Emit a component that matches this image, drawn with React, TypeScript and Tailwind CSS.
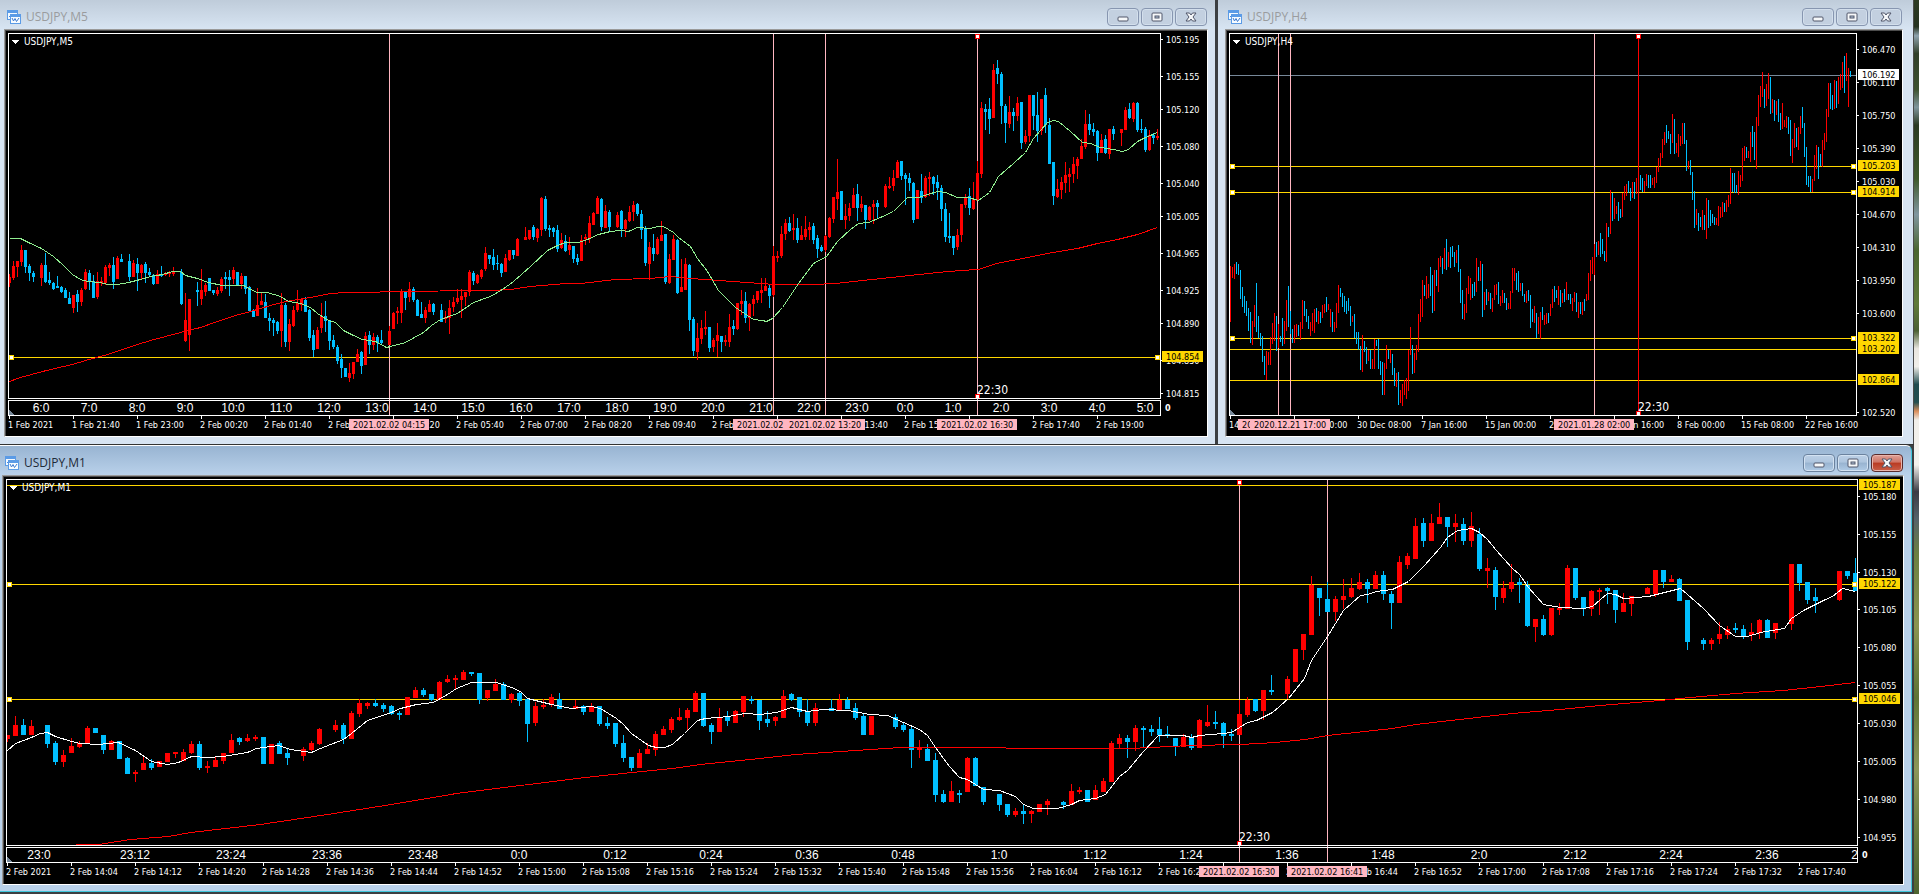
import clsx from "clsx";

export default function App() {
  return (
    <div className="flex min-h-screen bg-[#3c3f42]">
      <main className="min-w-0 flex-1">
        <div className="grid grid-cols-[1215fr_696fr] gap-[3px] border-b border-[#333333]">
          <ChartWindow title="USDJPY,M5" frame="pl-1 pr-[7px] pb-[7px]" bar="pl-[3px]">
            <Chart {...m5} />
          </ChartWindow>
          <ChartWindow title="USDJPY,H4" frame="pl-[7px] pr-[10px] pb-[7px] border-r border-[#4a4a4a]" bar="pl-[3px]">
            <Chart {...h4} />
          </ChartWindow>
        </div>
        <ChartWindow
          title="USDJPY,M1"
          active
          frame="mr-[2px] pl-[2px] pr-[7px] pb-[6px] border-t border-t-white border-r border-r-[#3fc6dc] border-b border-b-[#3fc6dc] rounded-tr-md"
          bar="pl-[3px]"
        >
          <Chart {...m1} />
        </ChartWindow>
      </main>
      <aside className="w-[5px] bg-[linear-gradient(180deg,#2c3a22_0%,#26331f_3%,#8fa3ae_4%,#2f3f2a_6%,#3d5230_10%,#7f959c_12%,#2a3a22_14%,#3f5a2c_20%,#8096a0_24%,#4a6630_28%,#5f7a3a_34%,#4b6034_37%,#e9e6df_39%,#f1efea_41%,#1f4c50_43%,#234f50_45%,#d98e5c_46%,#f1efea_47%,#f3f1ec_52%,#3a3a44_55%,#55626a_58%,#6c8040_62%,#8a9450_70%,#5f7434_78%,#8c9658_86%,#6a7c40_93%,#4e6430_100%)]" />
    </div>
  );
}

interface WindowProps {
  title: string;
  frame: string;
  bar: string;
  active?: boolean;
  children: React.ReactNode;
}

function ChartWindow({ title, frame, bar, active, children }: WindowProps) {
  return (
    <section
      className={clsx(
        "min-w-0",
        frame,
        active
          ? "bg-[linear-gradient(180deg,#98b4d2_0px,#b9d1ea_29px)]"
          : "bg-[linear-gradient(180deg,#bfccda_0px,#d7e4f2_29px)]"
      )}
    >
      <header className={clsx("flex h-[29px] items-center justify-between pt-1", bar)}>
        <div className="flex items-center gap-[5px]">
          <WindowIcon />
          <h2
            className={clsx(
              "[font-family:'Open_Sans',sans-serif] text-xs leading-4",
              active ? "text-[#1e2a38]" : "text-[#9a9c9e]"
            )}
          >
            {title}
          </h2>
        </div>
        <div className="flex gap-[2px] pr-px">
          <WindowButton label="Minimize" active={active}>
            <rect x="1" y="4" width="10" height="4" rx="1" />
          </WindowButton>
          <WindowButton label="Restore" active={active}>
            <rect x="1" y="0" width="10" height="8" rx="1" />
            <rect x="4" y="3" width="4" height="2" fill="#b4c6da" />
          </WindowButton>
          <WindowButton label="Close" active={active} danger={active}>
            <path d="M1 0h3.5L6 2 7.500 0H11L8 4l3 4H7.500L6 6 4.500 8H1l3-4z" />
          </WindowButton>
        </div>
      </header>
      <div className="border border-t-[#9a9a9a] border-l-[#9a9a9a] border-r-white border-b-white">
        <div className="border-t border-l border-[#4d4d4d] bg-black">{children}</div>
      </div>
    </section>
  );
}

interface ButtonProps {
  label: string;
  active?: boolean;
  danger?: boolean;
  children: React.ReactNode;
}

function WindowButton({ label, active, danger, children }: ButtonProps) {
  return (
    <button
      type="button"
      aria-label={label}
      className={clsx(
        "flex h-[18px] w-8 items-center justify-center rounded-sm border inset-ring",
        danger
          ? "border-[#5a2a2a] bg-[linear-gradient(180deg,#dfa198_0%,#cf7464_45%,#b93a22_50%,#c9604a_100%)] inset-ring-[#eab5ab]"
          : active
            ? "border-[#6b829e] bg-[linear-gradient(180deg,#bcd0e6_0%,#aec5de_45%,#98b3d0_50%,#b0cbe6_100%)] inset-ring-[#d3e2f2]"
            : "border-[#8796b0] bg-[#c3d0e0] inset-ring-[#d3dfec]"
      )}
    >
      <svg viewBox="0 -1 12 10" className="h-[10px] w-3" fill="#f6f8fa" stroke="#50566a" strokeWidth="1">
        {children}
      </svg>
    </button>
  );
}

function WindowIcon() {
  return (
    <svg viewBox="0 0 14 14" className="size-[14px]" shapeRendering="crispEdges">
      <rect x="0" y="0" width="11" height="10" fill="#5b9be6" />
      <rect x="1" y="3" width="9" height="6" fill="#f4faff" />
      <path d="M2 6.500h1v-2h1v2h1v-1h1" fill="none" stroke="#4a86d8" />
      <rect x="3" y="4" width="11" height="10" fill="#5b9be6" />
      <rect x="4" y="7" width="9" height="6" fill="#f8fcff" />
      <path d="M5 8l1.500 3L8 8.500 9.500 11.500 12 8" fill="none" stroke="#3f7bd0" shapeRendering="auto" />
    </svg>
  );
}

interface ChartData {
  symbol: string;
  // left, top, right and bottom edge of the plot frame
  plot: [number, number, number, number];
  view: [number, number, number, number];
  axisY: number;
  candles: Candle[];
  bodyWidth: number;
  averages: { color: string; points: string }[];
  levels: { y: number; price: string; handles?: boolean; current?: boolean }[];
  verticals: { x: number; red?: boolean }[];
  session: { x: number; y: number };
  stamps: [number, string][];
  prices: [number, string][];
  dates: string[];
  hours?: { first: number; step: number; labels: string[] };
}

interface Candle {
  x: number;
  up: boolean;
  high: number;
  top: number;
  bottom: number;
  low: number;
}

function Chart(c: ChartData) {
  const [left, top, right, bottom] = c.plot;
  const clip = `clip-${c.symbol}`;
  return (
    <svg
      viewBox={c.view.join(" ")}
      className="block h-auto w-full [font-family:'DejaVu_Sans_Condensed','DejaVu_Sans',sans-serif]"
      shapeRendering="crispEdges"
      role="img"
      aria-label={c.symbol}
    >
      <clipPath id={clip}>
        <rect x={left + 1} y={top + 1} width={right - left - 1} height={c.axisY - top - 1} />
      </clipPath>

      <g clipPath={`url(#${clip})`}>
        {c.levels.map((l) => (
          <rect key={l.y} x={left} y={l.y} width={right - left} height={1} fill={l.current ? "#778899" : "#ffd700"} />
        ))}
        {c.verticals.map((v) => (
          <rect key={v.x} x={v.x} y={top} width={1} height={c.axisY - top} fill={v.red ? "#ff0000" : "#ffb6c1"} />
        ))}
        {c.candles.map((k) => (
          <g key={k.x} fill={k.up ? "#ff0000" : "#00bfff"}>
            <rect x={k.x} y={k.high} width={1} height={Math.max(1, k.low - k.high)} />
            {c.bodyWidth > 1 && (
              <rect
                x={k.x - (c.bodyWidth - 1) / 2}
                y={k.top}
                width={c.bodyWidth}
                height={Math.max(1, k.bottom - k.top)}
              />
            )}
          </g>
        ))}
        {c.averages.map((a) => (
          <polyline key={a.color} points={a.points} fill="none" stroke={a.color} transform="translate(.5 .5)" />
        ))}
      </g>

      {c.levels
        .filter((l) => l.handles)
        .map((l) => (
          <g key={l.y} fill="#ffffff" stroke="#ffd700">
            <rect x={left + 1.5} y={l.y - 1.5} width={4} height={4} />
            <rect x={right - 4.5} y={l.y - 1.5} width={4} height={4} />
          </g>
        ))}
      <g fill="#ffffff" stroke="#ff0000">
        <rect x={c.session.x - 1.5} y={top + 1.5} width={4} height={4} />
        <rect x={c.session.x - 1.5} y={bottom - 3.5} width={4} height={4} />
      </g>
      <text x={c.session.x} y={c.session.y} fill="#ffffff" className="text-xs">
        22:30
      </text>

      <path d={`M${left + 4} ${top + 7}h7l-3.500 4z`} fill="#ffffff" />
      <text x={left + 16} y={top + 12} fill="#ffffff" className="text-[10px]">
        {c.symbol}
      </text>

      <rect x={left + 0.5} y={top + 0.5} width={right - left} height={bottom - top} fill="none" stroke="#ffffff" />
      {c.hours && (
        <>
          <rect
            x={left + 0.5}
            y={bottom + 2.5}
            width={right - left}
            height={c.axisY - bottom - 2}
            fill="none"
            stroke="#ffffff"
          />
          {c.verticals.map((v) => (
            <rect key={v.x} x={v.x} y={bottom + 3} width={1} height={c.axisY - bottom - 3} fill="#ffb6c1" />
          ))}
          <g
            fill="#ffffff"
            textAnchor="middle"
            className="[font-family:'Liberation_Sans',sans-serif] text-xs"
            clipPath={`url(#${clip})`}
          >
            {c.hours.labels.map((label, i) => (
              <text key={label} x={c.hours!.first + i * c.hours!.step} y={c.axisY - 3}>
                {label}
              </text>
            ))}
          </g>
          <text x={right + 5} y={c.axisY - 4} fill="#ffffff" className="text-[9px] font-bold">
            0
          </text>
        </>
      )}
      <path d={`M${left + 1} ${c.axisY - 5}v5h5z`} fill="#778899" />

      <g className="text-[9px]" fill="#ffffff">
        {c.prices.map(([y, label]) => (
          <g key={label}>
            <rect x={right + 1} y={y} width={2} height={1} />
            <text x={right + 6} y={y + 4}>
              {label}
            </text>
          </g>
        ))}
        {c.dates.map((label, i) => (
          <g key={label}>
            <rect x={left + 1 + i * 64} y={c.axisY + 1} width={1} height={3} />
            <text x={left + i * 64} y={c.axisY + 13}>
              {label}
            </text>
          </g>
        ))}
      </g>

      <g className="text-[9px]" fill="#000000">
        {c.levels.map((l) => (
          <g key={l.y}>
            <rect x={right + 2} y={l.y - 6} width={41} height={11} fill={l.current ? "#ffffff" : "#ffd700"} />
            <text x={right + 6} y={l.y + 3}>
              {l.price}
            </text>
          </g>
        ))}
        {c.stamps.map(([x, label]) => (
          <g key={x}>
            <rect x={x} y={c.axisY + 4} width={80} height={11} fill="#ffb6c1" />
            <text x={x + 4} y={c.axisY + 13}>
              {label}
            </text>
          </g>
        ))}
      </g>
    </svg>
  );
}

// One candle per token: r/b and high,top,bottom,low in thirds of a pixel below y0.
// Bars without a body carry only high,low. "-" is a minute without a trade.
function parse(rows: string, x0: number, step: number, y0: number, from = 0): Candle[] {
  return rows
    .trim()
    .split(/\s+/)
    .flatMap((row, i) => {
      if (row === "-") return [];
      const v = row
        .slice(1)
        .split(",")
        .map((n) => y0 + Math.round(Number(n) / 3));
      const [high, top, bottom, low] = v.length === 2 ? [v[0], v[0], v[1], v[1]] : v;
      return [{ x: x0 + (from + i) * step, up: row[0] === "r", high, top, bottom, low }];
    });
}

function clock(startMinute: number, every: number, count: number, pad: boolean) {
  return Array.from({ length: count }, (_, i) => {
    const t = (startMinute + i * every) % 1440;
    const h = Math.floor(t / 60);
    return pad ? `${String(h).padStart(2, "0")}:${String(t % 60).padStart(2, "0")}` : `${h}:${t % 60}`;
  });
}

const m5: ChartData = {
  symbol: "USDJPY,M5",
  plot: [8, 33, 1160, 398],
  view: [6, 31, 1201, 405],
  axisY: 415,
  bodyWidth: 3,
  candles: [
    ...parse(
      `r148,156,173,186 r108,123,159,165 r108,108,126,156 r60,75,111,123 b75,75,126,144 b117,123,144,168 b138,144,156,171 -
      r114,120,159,183 b84,120,171,174 b141,165,174,180 b171,174,192,195 b153,183,189,189 b183,186,201,204 b189,195,219,219
      b201,219,237,237 r210,210,249,264 b195,207,231,261 r189,195,231,243 r132,141,192,195 b135,144,171,195 b150,168,219,219
      r141,168,216,222 r156,168,174,183 r120,126,174,180 r114,120,129,153 b96,120,171,192 r93,99,162,162 b87,102,111,111 -
      b87,108,156,168 r105,114,156,156 b99,117,144,198 r117,120,144,165 b111,117,144,174 b129,141,150,156 b147,150,177,180
      r135,147,177,177 b123,147,153,156 r141,144,150,153 r138,142,147,156 r126,142,147,153 - b132,141,237,240 r204,285,348,351
      r222,222,330,378 - b171,195,201,243 r132,195,222,240 r174,180,201,213 b159,159,198,198 b195,195,204,210 r186,195,207,213
      r156,162,198,204 b141,156,162,192 b135,156,165,213 r126,135,162,177 b141,141,180,180 r144,153,177,192 b153,153,192,207
      b183,186,258,261 b252,258,276,276 r189,240,273,273 r201,228,240,240 b207,231,279,279 b264,279,288,318 b279,285,294,333
      b288,291,318,327 r204,240,318,366 b234,240,351,366 r282,297,351,378 r243,255,303,306 r195,234,255,261 r222,222,240,258
      b216,225,261,261 b252,255,339,348 b315,330,375,396 r306,315,372,372 r234,273,309,324 b228,273,288,321 b285,285,348,375
      b330,345,366,372 b360,366,408,417 b387,402,429,459 b429,429,456,456 r414,444,459,471 r411,411,447,462 r372,387,411,411
      b378,381,423,447 r321,333,420,420 b318,330,360,387 r324,336,360,375 b330,336,354,381 b315,345,354,357 - r303,318,360,360
      r261,264,312,312 r246,258,264,297`,
      9, 4, 225
    ),
    ...parse(
      `r327,333,399,429 b333,336,354,390 r306,327,351,366 b321,327,360,366 b357,360,408,408 b366,402,414,414 r381,390,414,429
      r360,372,396,396 b369,372,396,405 - b372,390,426,426 r393,411,417,429 r360,384,414,462 r351,366,381,396 r327,354,366,372
      r327,348,360,414 r336,336,351,378 r270,276,336,348 b273,279,303,315 r282,285,309,312 r267,270,291,297 r201,219,267,273
      b225,225,237,252 b207,231,255,270 b225,249,252,270 b249,252,279,291 r222,234,276,276 r210,210,240,243 b210,210,225,237
      r174,177,228,228 - r141,171,180,180 r150,150,177,180 b135,141,171,180 r144,147,174,186 r51,54,150,168 b48,57,147,153
      b135,144,150,171 b141,144,156,171 b135,150,207,216 r159,180,204,207 b165,183,213,216 r171,195,210,225 b198,198,237,249
      b222,234,246,255 r165,180,243,243 r162,171,177,195 r108,129,177,189 r96,99,135,135 r48,54,102,102 b54,57,141,153
      r75,93,144,144 b90,96,141,153 - r96,105,141,144 b90,93,147,171 r117,120,147,171 r78,96,123,126 r63,75,96,123
      b69,72,102,108 b90,102,150,177 b138,144,249,258 r186,201,252,300 b162,204,222,243 r171,177,222,225 r123,165,183,183
      b162,162,306,312 r222,237,309,312 r165,177,240,240 b177,180,339,342 r237,321,336,336 r234,252,330,330 b252,255,420,453
      b411,417,513,528 r429,474,516,540 r420,444,477,492 r393,441,447,465 b441,441,504,516 r474,480,501,516 r429,465,483,531
      b468,468,486,516 r465,480,486,498 r402,441,486,501 b420,438,447,465 r369,369,447,450 r330,363,372,405 b336,363,414,429
      r369,372,414,453 r345,357,372,408 r333,333,360,369 r294,330,339,369 r294,318,333,333 b315,324,348,384 r198,228,345,351
      r213,228,234,246`,
      9, 4, 180, 98
    ),
    ...parse(
      `r558,582,648,654 r537,549,582,600 b531,549,573,576 r522,564,570,600 b534,564,600,609 r558,585,600,600 r528,567,591,600
      r546,561,570,600 b549,558,600,612 b585,594,627,654 b615,621,633,636 r585,588,630,636 r531,534,591,594 r471,471,537,549
      r357,456,477,510 b453,453,540,540 r492,528,540,567 r489,504,528,543 r444,465,504,504 b432,462,504,543 r468,492,504,516
      b495,495,540,567 r498,501,540,543 r480,492,501,552 b480,489,501,534 - r432,438,501,504 r411,438,444,447 r390,414,438,453
      r360,366,414,414 b363,363,408,420 b399,405,417,495 b399,414,429,453 b426,429,540,549 r450,450,537,537 b402,453,474,489
      r408,414,471,474 r396,411,417,468 b408,411,432,465 b405,426,444,480 b435,444,507,543 b489,507,591,606 b519,588,594,609
      b588,588,624,645 r567,585,621,630 r492,492,585,606 r462,474,495,504 b444,468,504,525 r426,477,507,510 r363,399,483,483
      r186,204,402,414 b192,207,216,270 b174,207,237,282 r72,90,234,234 b60,84,102,132 b96,102,198,252 b192,198,249,309
      r168,216,252,264 b204,216,228,273 r171,189,228,243 b186,186,309,327 r270,288,306,312 r165,165,288,306 b165,165,228,270
      b156,225,273,306 r177,177,273,285 b144,165,255,279 b234,255,372,372 b366,366,468,495 r417,447,471,474 r411,426,450,477
      r366,405,429,459 r384,402,411,456 r351,372,402,429 r351,357,378,417 r297,318,357,357 r210,252,321,327 b222,252,270,285
      b249,267,276,288 b270,273,339,363 r282,300,339,339 b285,297,339,342 r267,267,342,357 b258,267,282,300 - r267,267,279,318
      r201,210,270,270 b189,207,234,237 r186,189,237,246 b186,189,270,276 b237,267,270,279 b261,267,330,336 r270,285,330,333
      b279,285,294,312 r267,288,294,300`,
      9, 4, 40, 193
    ),
  ],
  averages: [
    {
      color: "#ff0000",
      points:
        "9,381 20,377 42,371 63,366 72,364 85,360 107,354 137,344 150,340 180,332 200,327 217,321 235,315 250,311 270,305 285,301 310,297 330,293 345,292 370,292 389,291 490,290 510,289 530,286 565,283 580,283 615,279 650,278 670,276 690,278 733,281 760,283 775,284 812,284 835,283 862,280 900,276 937,272 960,270 978,269 996,263 1022,258 1047,253 1077,248 1097,243 1117,239 1137,234 1157,227",
    },
    {
      color: "#90ee90",
      points:
        "9,238 20,238 30,243 41,248 53,256 63,265 72,274 80,279 87,281 100,282 107,284 117,284 128,282 140,279 150,276 162,274 172,271 180,271 185,275 197,278 208,282 222,285 243,285 250,289 257,292 267,292 280,296 288,301 300,303 310,307 317,313 328,320 335,322 343,330 353,335 362,339 375,341 386,347 390,346 405,342 423,332 431,325 440,319 457,313 473,302 490,296 502,289 513,281 530,266 547,250 557,245 565,242 578,242 587,239 598,234 610,231 620,230 628,231 637,227 650,228 657,226 663,226 673,232 678,237 690,246 697,258 707,271 718,290 735,307 753,319 762,320 766,321 772,318 782,307 798,283 813,263 826,256 837,241 850,229 858,223 868,222 880,217 893,211 907,197 918,197 927,194 937,191 945,192 957,197 968,197 978,200 989,192 998,176 1013,163 1025,152 1033,138 1047,122 1053,120 1058,121 1070,131 1082,142 1090,143 1100,147 1113,149 1122,151 1128,149 1137,141 1145,137 1157,132",
    },
  ],
  levels: [{ y: 357, price: "104.854", handles: true }],
  verticals: [{ x: 389 }, { x: 773 }, { x: 825 }, { x: 977 }],
  session: { x: 977, y: 394 },
  stamps: [
    [349, "2021.02.02 04:15"],
    [733, "2021.02.02 12:15"],
    [785, "2021.02.02 13:20"],
    [937, "2021.02.02 16:30"],
  ],
  prices: [
    [39, "105.195"],
    [76, "105.155"],
    [109, "105.120"],
    [146, "105.080"],
    [183, "105.040"],
    [216, "105.005"],
    [253, "104.965"],
    [290, "104.925"],
    [323, "104.890"],
    [360, "104.850"],
    [393, "104.815"],
  ],
  dates: [
    "1 Feb 2021",
    "1 Feb 21:40",
    "1 Feb 23:00",
    ...clock(20, 80, 15, true).map((t) => `2 Feb ${t}`),
  ],
  hours: { first: 41, step: 48, labels: clock(360, 60, 24, false) },
};

const h4: ChartData = {
  symbol: "USDJPY,H4",
  plot: [1229, 33, 1856, 415],
  view: [1227, 31, 675, 405],
  axisY: 415,
  bodyWidth: 1,
  candles: [
    ...parse(
      `r138,306 r141,174 r132,177 b126,162 b132,165 b150,237 b201,261 b228,279 b243,288 b264,333 b276,369 r303,375 r255,321
      b189,336 b288,354 b339,378 b348,426 b408,465 r393,480 r396,435 r351,435 r309,372 r279,363 b288,393 r312,384 b348,366
      b294,378 r303,372 r240,333 b198,321 b273,342 b327,369 r315,369 r312,351 b315,348 r306,360 r240,327 b243,288 b267,306
      b288,327 r306,348 r279,333 r267,339 b264,306 r273,312 b276,309 r255,294 r252,279 b231,276 r252,270 r267,321 b276,336
      r306,336 r249,324 r195,279 b204,231 b219,261 b228,276 b243,282 b234,273 b258,318 r288,306 b282,354 b336,372 b336,390
      b378,450 r345,456 b363,396 b381,432 r390,423 b390,447 r417,447 r357,447 b360,378 b357,447 b423,465 b426,525 r429,525
      r375,447 b390,417 r390,429 b402,465 b444,498 r459,501 b456,555 r510,549 r492,558 r480,525 r474,537 r390,513 r321,405
      b375,462 r399,459 r375,420 r282,396 r237,306 r180,291 b195,228 r168,237 r192,234 b141,228 b165,279 r150,273 b150,198
      r114,216 r108,141 b114,162 r84,147 b57,150 r96,141 b81,144 b78,111 b96,141 r90,129 b75,156 b147,249 b210,297 r252,300
      r204,279 r168,222 r174,240 b192,234 b186,228 r114,216 b141,183 r123,183 b132,291 r216,270 b207,255 r216,243 b219,267
      r234,276 r195,240 r192,225 b186,252 r228,258 r210,249 b219,249 b234,270 r249,267 r213,267 r144,219 r144,183 b159,210
      b153,216 r189,213 b189,228 b222,246 r213,249 b210,243`,
      1230, 2, 220
    ),
    ...parse(
      `b885,984 b927,966 r918,969 b939,1014 r951,1002 r936,1017 b921,960 r945,975 r939,972 b939,969 r912,948 r867,924 b858,906
      b870,894 r858,915 b870,921 r879,909 b867,906 r846,900 b882,900 b882,912 r894,933 r876,906 b879,936 r906,954 b906,942
      r906,945 b897,933 r882,903 r819,900 r780,843 r771,822 r732,825 b726,771 r723,765 b699,771 b717,762 b753,783 r669,786
      b681,711 r570,702 b579,663 r594,657 r618,642 b606,663 b627,654 r579,651 r558,600 r552,588 b543,579 b564,603 r546,594
      b546,597 r534,582 r528,576 b525,570 b534,576 r543,576 r522,558 b525,564 b525,564 r534,555 r531,564 r501,549 r474,516
      r459,498 r417,474 r396,435 b375,429 b393,417 b402,462 r342,429 b357,462 r429,459 r402,471 r408,438 r369,432 b369,432
      b420,513 r483,507 b480,525 b516,600 b573,684 r627,675 b639,693 b651,681 r630,690 b645,690 r594,717 b600,684 b630,678
      b642,669 b651,675 r654,675 r618,678 r621,654 r606,651 b609,636 r600,636 r585,621 r504,612 b519,576 b519,579 b555,579
      r513,585 r525,561 r444,543 r438,483 b441,474 r453,474 r396,486 b378,441 b396,480 r351,507 r285,378 r258,321 r216,291
      b267,324 r252,318 r219,297 b231,342 r297,339 b300,363 r303,345 b297,366 b339,390 r309,387 r360,381 r348,384 b351,402
      b360,468 r417,489 r369,444 b384,441 r381,450 r348,402 b321,384 b369,471 b441,555 b528,561 b528,576 r537,576 r465,543
      r435,507 b441,537 b462,498 r420,501 r399,450 r327,426 r249,351 b249,327 b285,330 r240,327 b243,324 r231,312 r222,270
      r186,264 b168,279 r159,243 r204,321 b213,231`,
      1230, 2, 0, 150
    ),
  ],
  averages: [],
  levels: [
    { y: 75, price: "106.192", current: true },
    { y: 166, price: "105.203", handles: true },
    { y: 192, price: "104.914", handles: true },
    { y: 338, price: "103.322", handles: true },
    { y: 349, price: "103.202" },
    { y: 380, price: "102.864" },
  ],
  verticals: [{ x: 1278 }, { x: 1290 }, { x: 1594 }, { x: 1638, red: true }],
  session: { x: 1638, y: 411 },
  stamps: [
    [1238, "2020.12.18 17:00"],
    [1250, "2020.12.21 17:00"],
    [1554, "2021.01.28 02:00"],
  ],
  prices: [
    [49, "106.470"],
    [82, "106.110"],
    [115, "105.750"],
    [148, "105.390"],
    [181, "105.030"],
    [214, "104.670"],
    [247, "104.310"],
    [280, "103.950"],
    [313, "103.600"],
    [412, "102.520"],
  ],
  dates: [
    "14 Dec 2020",
    "22 Dec 00:00",
    "30 Dec 08:00",
    "7 Jan 16:00",
    "15 Jan 00:00",
    "22 Jan 08:00",
    "29 Jan 16:00",
    "8 Feb 00:00",
    "15 Feb 08:00",
    "22 Feb 16:00",
  ],
};

const m1: ChartData = {
  symbol: "USDJPY,M1",
  plot: [6, 479, 1857, 845],
  view: [4, 477, 1899, 407],
  axisY: 862,
  bodyWidth: 5,
  candles: parse(
    `r885,885,897,906 r828,855,887,887 b837,855,885,885 r840,857,885,885 - b855,855,911,923 b903,909,965,975 r930,945,966,981
    r894,918,939,939 r903,909,921,923 r858,864,912,912 b864,864,879,879 b885,885,930,942 r900,903,930,930 b903,903,957,957
    b951,954,1002,1002 r990,996,1001,1026 r945,969,990,990 b957,969,984,990 r963,963,981,981 r939,939,966,966 r936,937,941,954
    r927,936,963,963 r903,912,939,942 b903,912,984,990 r963,978,984,999 r951,960,981,981 r939,939,963,972 r882,900,939,939
    b891,894,906,915 r882,894,903,906 r885,891,897,903 b891,891,972,972 r912,912,972,972 b903,909,942,942 b927,939,954,975 -
    r921,927,948,963 r903,909,930,933 r864,867,912,915 - r840,855,870,876 b849,855,897,912 r813,819,897,897 r777,789,822,831
    r786,789,798,807 b777,789,798,801 b789,795,807,816 b795,798,822,825 b813,819,825,840 r771,771,825,825 r741,750,774,774
    b744,750,765,771 b762,762,780,783 r723,726,780,780 r705,717,726,729 r705,714,720,747 r690,696,720,720 b696,696,702,708
    b699,699,780,792 r750,750,774,783 r717,732,753,753 b726,732,780,780 r759,762,780,789 b756,759,783,798 b774,777,852,906
    r786,798,849,858 r777,795,801,807 r762,771,792,801 b759,777,807,807 - r780,798,807,807 b795,798,816,825 r789,798,816,816
    b798,798,852,858 b831,849,858,867 b849,849,912,921 b885,909,954,966 b951,951,984,993 r927,939,984,984 r909,927,942,942
    r873,882,930,948 r858,867,885,885 r831,837,870,879 r804,831,840,843 r804,810,834,873 r753,759,816,816 b759,759,858,861
    b849,855,876,912 r804,831,876,876 b813,831,843,858 r810,813,849,849 r768,768,816,831 b768,777,783,792 b780,780,843,870
    b813,837,849,861 r828,831,843,858 r750,768,834,834 b759,762,780,783 b771,771,816,831 b777,813,849,858 r789,804,849,858 -
    b777,804,813,813 r762,780,813,813 b771,780,807,807 b789,804,834,840 b819,828,885,885 r828,828,885,885 - - b822,831,861,867
    b846,855,870,876 b855,867,930,984 r900,924,930,954 b912,927,963,963 b939,960,1065,1086 b1050,1062,1086,1089
    r1023,1053,1086,1086 b1050,1059,1065,1089 r951,954,1056,1056 b951,954,1038,1038 b1041,1041,1086,1095 - b1062,1062,1095,1113
    b1092,1092,1125,1131 r1104,1113,1126,1131 b1092,1113,1122,1152 r1110,1113,1122,1149 r1092,1092,1116,1116
    r1077,1083,1095,1125 - b1083,1086,1095,1107 r1032,1053,1095,1095 r1041,1050,1056,1062 b1050,1050,1086,1086
    r1035,1050,1080,1080 r1014,1023,1056,1056 r903,909,1026,1026 r882,894,912,924 b885,894,906,954 r855,864,906,933
    b858,864,870,921 b855,867,876,888 b831,867,885,906 b858,882,888,894 b894,894,921,948 r882,891,921,921 b882,891,924,930
    r837,840,924,924 r795,846,858,861 b813,846,852,867 b846,849,888,924 b867,882,888,903 r780,822,885,885 r771,780,825,831
    b777,777,813,816 r750,750,813,840 b705,750,756,765 - r708,717,762,780 r627,627,726,726 r582,582,630,660 r408,435,585,585
    b444,444,474,528 b426,477,516,516 r468,477,516,543 r417,468,480,507 r414,444,471,474 r399,426,447,450 b417,426,447,489
    r393,405,447,447 b393,405,462,480 b453,462,489,567 r348,366,489,489 r339,348,375,387 r234,258,357,357 b234,249,303,321
    r222,249,303,303 r189,231,252,252 b231,231,261,321 r222,249,261,306 b234,252,303,315 r216,258,303,321 b264,282,387,393
    r354,384,393,444 b381,390,471,510 r423,444,474,489 r372,426,447,456 b414,426,435,489 b423,435,558,561 r537,537,561,606
    b525,537,585,588 r504,504,585,588 r489,504,510,525 r375,384,507,507 b384,384,474,480 b471,471,507,528 r450,453,507,528
    r444,450,456,525 b441,444,453,492 b450,450,510,549 r459,489,516,516 r468,468,492,528 - r441,444,462,462 r390,390,462,471
    b390,390,426,444 r405,417,426,426 b414,417,483,483 b480,480,606,630 - b594,600,612,630 r594,600,612,630 r546,582,598,612
    r558,567,585,597 b549,564,570,579 b555,567,588,597 r549,576,585,603 r537,540,579,597 b537,540,594,594 r549,549,579,597 -
    r372,372,552,570 b372,372,429,453 b426,426,480,492 b444,471,483,519 - - r393,393,480,483 b393,393,408,417 b354,399,453,453`,
    7, 8, 440
  ),
  averages: [
    {
      color: "#ff0000",
      points:
        "68,845 83,844 98,844 130,839 168,836 190,832 260,824 327,814 391,804 456,793 520,785 585,777 631,772 672,768 700,764 750,759 795,754 840,751 900,747 1000,747 1010,748 1130,748 1190,745 1240,744 1275,742 1305,739 1327,735 1392,728 1415,724 1450,720 1512,713 1560,709 1600,705 1660,700 1690,697 1735,693 1783,690 1820,686 1855,682",
    },
    {
      color: "#ffffff",
      points:
        "7,750 15,743 31,737 40,733 47,732 55,736 71,741 80,743 98,744 118,742 135,750 151,761 167,764 178,762 191,756 208,757 222,756 247,752 256,748 278,745 290,749 311,752 320,748 343,739 351,733 367,720 391,712 400,708 416,704 433,702 447,694 456,688 471,682 496,682 511,687 520,691 527,698 551,704 571,708 591,706 600,708 616,718 623,724 631,733 648,745 656,747 664,747 672,744 684,733 697,720 705,718 728,716 744,713 760,714 776,712 791,707 807,711 823,709 848,710 869,714 887,715 903,722 919,729 927,735 935,747 949,766 959,777 967,779 983,789 999,790 1015,796 1023,804 1033,808 1057,808 1071,804 1079,800 1095,798 1105,794 1119,776 1127,770 1143,751 1158,735 1183,735 1191,737 1199,735 1223,733 1231,732 1247,722 1256,720 1272,712 1279,706 1288,698 1304,678 1311,660 1327,636 1343,610 1360,595 1367,594 1376,591 1392,589 1408,581 1424,565 1440,547 1447,537 1457,530 1471,528 1479,532 1487,539 1496,550 1512,568 1519,574 1528,587 1543,604 1560,607 1583,608 1592,606 1607,593 1615,594 1623,598 1648,596 1664,592 1680,588 1687,594 1703,608 1719,625 1735,636 1747,636 1760,632 1784,628 1791,618 1803,610 1823,600 1832,596 1842,588 1855,591",
    },
  ],
  levels: [
    { y: 485, price: "105.187" },
    { y: 584, price: "105.122", handles: true },
    { y: 699, price: "105.046", handles: true },
  ],
  verticals: [{ x: 1239 }, { x: 1327 }],
  session: { x: 1239, y: 841 },
  stamps: [
    [1199, "2021.02.02 16:30"],
    [1287, "2021.02.02 16:41"],
  ],
  prices: [
    [496, "105.180"],
    [534, "105.155"],
    [572, "105.130"],
    [609, "105.105"],
    [647, "105.080"],
    [685, "105.055"],
    [723, "105.030"],
    [761, "105.005"],
    [799, "104.980"],
    [837, "104.955"],
  ],
  dates: ["2 Feb 2021", ...clock(844, 8, 28, true).map((t) => `2 Feb ${t}`)],
  hours: { first: 39, step: 96, labels: clock(1380, 12, 20, false) },
};
